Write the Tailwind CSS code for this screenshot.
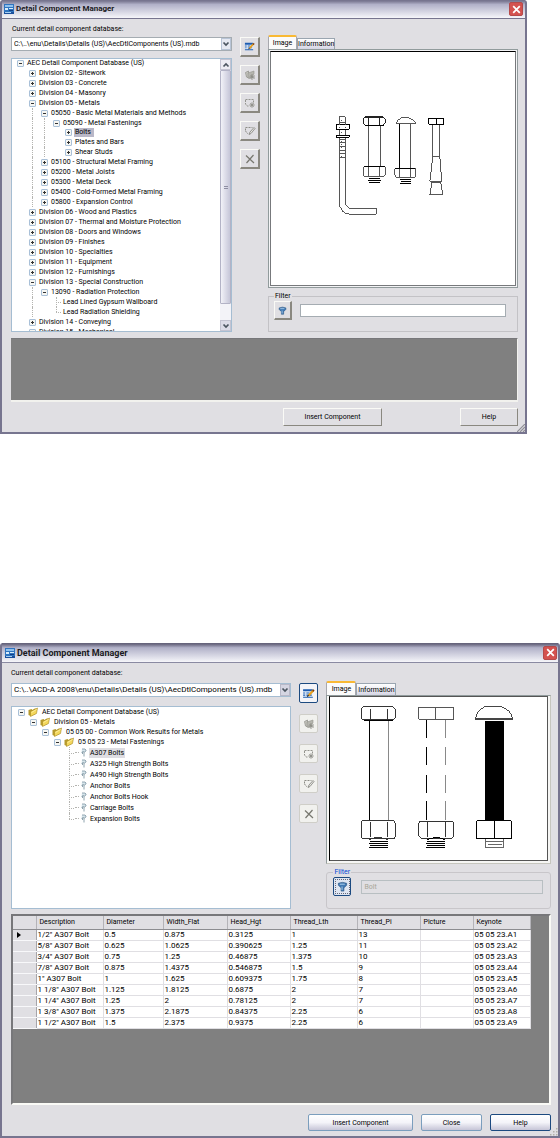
<!DOCTYPE html>
<html lang="en">
<head>
<meta charset="utf-8">
<title>Detail Component Manager</title>
<script src="https://cdn.jsdelivr.net/npm/@tailwindcss/browser@4"></script>
</head>
<body class="bg-white text-black font-['Roboto','Liberation_Sans',sans-serif] text-[7px] leading-[10px]">

<!-- Icons shared by both dialogs -->
<svg class="hidden" aria-hidden="true">
  <defs>
    <symbol id="i-app" viewBox="0 0 10 10"><rect width="10" height="10" fill="#2f74c0"/><path d="M1 1h8v2H1z" fill="#8fc1ee"/><path d="M1 4h3v2H1zM5 4h4v1H5z" fill="#d8ecfb"/><path d="M5 6h4v1H5z" fill="#123f86"/><path d="M0 8h10v2H0z" fill="#1b4f9c"/><path d="M1 8h6v1H1z" fill="#a8d0f3"/></symbol>
    <symbol id="i-x" viewBox="0 0 10 10"><path d="M2 2l6 6M8 2l-6 6" stroke="#fff" stroke-width="1.6" fill="none"/></symbol>
    <symbol id="i-chev" viewBox="0 0 8 8"><path d="M1.5 2.5L4 5l2.500-2.500" stroke="#4b5560" stroke-width="1.7" fill="none"/></symbol>
    <symbol id="i-edit" viewBox="0 0 12 12"><rect x="1" y="2" width="9" height="8" fill="#eaf3fc"/><path d="M1 2h9v2H1zM1 5h2v1H1zM4 5h3v1H4zM1 7h2v1H1zM4 7h5v1H4zM1 9h9v1H1z" fill="#1d5cb0"/><path d="M6 8l4.500-5" stroke="#e8a020" stroke-width="2"/><path d="M10 4l1-1.500" stroke="#7a3b10" stroke-width="1.500"/><path d="M5 9l1-1.500" stroke="#222" stroke-width="1"/></symbol>
    <symbol id="i-add" viewBox="0 0 12 12"><path d="M1.500 3.500l3-1.500v7l-2-1z" fill="#c4c4bd" stroke="#96968f" stroke-width=".8"/><path d="M4 4l6-2v3L6 9.500 4 9z" fill="#b5b5ae" stroke="#96968f" stroke-width=".6"/><path d="M8 5v6M5.500 8h5.500M6.500 6l4 4M10.500 6l-4 4" stroke="#85857e" stroke-width=".8"/></symbol>
    <symbol id="i-comp" viewBox="0 0 12 12"><path d="M1.500 2.500h8v3M1.500 3v4l1.500 2h2" fill="none" stroke="#94948e" stroke-dasharray="2 1"/><circle cx="8" cy="8" r="1.500" fill="#94948e"/><path d="M8 5v6M5 8h6M6 6l4 4M10 6l-4 4" stroke="#94948e" stroke-width=".7"/></symbol>
    <symbol id="i-mod" viewBox="0 0 12 12"><path d="M1.500 5.500v-3h7M1.500 6L4 9" fill="none" stroke="#8c8c86" stroke-dasharray="2 1"/><path d="M5 9.500l1-2.500L10 2.500l1 1L7 8.500z" fill="#e8e8e4" stroke="#7d7d78" stroke-width=".8"/></symbol>
    <symbol id="i-del" viewBox="0 0 12 12"><path d="M2 2.500l8 7.500M9.500 2L2.500 10" stroke="#77776f" stroke-width="1.200" fill="none"/></symbol>
    <symbol id="i-funnel" viewBox="0 0 12 12"><path d="M1.500 2.500q4.500-2 9 0v2L7.500 7.500V11h-3V7.500L1.500 4.500z" fill="#4079b4" stroke="#24507f" stroke-width=".7"/><path d="M3 3.500h5.500M5.500 6v4" stroke="#b4d4ef"/></symbol>
    <symbol id="i-folder" viewBox="0 0 11 10"><path d="M1 3l3-1 1 1 3-2v6L3 9 1 8z" fill="#b69a2d"/><path d="M3 4.500l7-3.500-1 5.500-6 3z" fill="#f3d75c" stroke="#a88a24" stroke-width=".6"/><path d="M4 5.500L9 2.500" stroke="#fff3ac" stroke-width=".8"/></symbol>
    <symbol id="i-bolt" viewBox="0 0 8 9"><path d="M3 1h3l1 1v1L5.500 4 4 3.500 2.500 4.500" fill="#d6e4ea" stroke="#7d96a3" stroke-width=".8"/><path d="M5 4v4.500M3.500 4v2" stroke="#8da2ad"/></symbol>
    <symbol id="i-grip" viewBox="0 0 8 8"><path d="M0 8l8-8M3 8l5-5M6 8l2-2" stroke="#8f8f96" stroke-width="1.200"/></symbol>
    <symbol id="i-dots" viewBox="0 0 8 8"><path d="M6 0h1.500v1.500H6zM3 3h1.500v1.500H3zM6 3h1.500v1.500H6zM0 6h1.500v1.500H0zM3 6h1.500v1.500H3zM6 6h1.500v1.500H6z" fill="#b3b1aa"/></symbol>
  </defs>
</svg>

<!-- Classic-style dialog -->
<section aria-label="Detail Component Manager, classic" class="relative mr-[33px] rounded-t-[3px] border-2 border-t-0 border-[#77758f] bg-[#e0dfe3]">
  <header class="flex h-[19px] items-center gap-[2px] border-b border-[#77758f] bg-linear-to-b from-[#77758f] from-5% via-[#b1b1c8] via-25% to-[#f6f6fa] pl-[2px] pr-[2px]">
    <svg class="size-[10px]"><use href="#i-app"/></svg>
    <h1 class="grow text-[8px] font-bold leading-[12px] text-[#1a1a22]">Detail Component Manager</h1>
    <button aria-label="Close window" class="grid size-[14px] place-items-center rounded-[2px] border border-[#b54a4a] bg-[#d4524f]"><svg class="size-[11px]"><use href="#i-x"/></svg></button>
  </header>
  <main class="pl-[9px] pr-[7px] pt-[4px]">
    <div class="grid grid-cols-[minmax(0,221fr)_20px_minmax(0,250fr)] gap-x-2">
      <div class="flex flex-col pt-px">
        <label for="db1" class="pl-px">Current detail component database:</label>
        <div class="relative mt-[3px]">
          <select id="db1" class="block h-[14px] w-full appearance-none border border-[#a5acb2] bg-white pl-[2px] leading-[12px]"><option>C:\..\enu\Details\Details (US)\AecDtlComponents (US).mdb</option></select>
          <span class="pointer-events-none absolute inset-y-[1px] right-[1px] grid w-[10px] place-items-center border border-[#b8c4d6] bg-[#e6e9f2]"><svg class="size-2"><use href="#i-chev"/></svg></span>
        </div>
        <div class="mt-[7px] flex h-[274px] border border-[#a5bdd2] bg-white">
          <ul id="tree1" role="tree" aria-label="Components" class="min-w-0 grow overflow-hidden pl-[2px]"></ul>
          <div class="flex w-[11px] flex-none flex-col bg-[#f3f3f8]">
            <button aria-label="Scroll up" class="grid h-[11px] place-items-center border border-[#c4c4d2] bg-[#ececf3]"><svg class="size-2 rotate-180"><use href="#i-chev"/></svg></button>
            <div class="flex h-[234px] flex-col items-center justify-center gap-[1px] rounded-[1px] border border-[#b3b3c6] bg-linear-to-r from-[#f2f2f8] to-[#c6c6d8]"><i class="h-px w-1 bg-[#8e8ea2]"></i><i class="h-px w-1 bg-[#8e8ea2]"></i></div>
            <button aria-label="Scroll down" class="mt-auto grid h-[11px] place-items-center border border-[#c4c4d2] bg-[#dcdce8]"><svg class="size-2"><use href="#i-chev"/></svg></button>
          </div>
        </div>
      </div>
      <div class="flex flex-col gap-2 pt-[14px]">
        <button aria-label="Edit database" class="grid h-5 place-items-center border border-b-2 border-r-2 border-[#fafaf6] border-b-[#8a8880] border-r-[#8a8880]"><svg class="size-[11px]"><use href="#i-edit"/></svg></button>
        <button aria-label="Add group" disabled class="grid h-5 place-items-center border border-b-2 border-r-2 border-[#fafaf6] border-b-[#8a8880] border-r-[#8a8880]"><svg class="size-3"><use href="#i-add"/></svg></button>
        <button aria-label="Add component" disabled class="grid h-5 place-items-center border border-b-2 border-r-2 border-[#fafaf6] border-b-[#8a8880] border-r-[#8a8880]"><svg class="size-3"><use href="#i-comp"/></svg></button>
        <button aria-label="Edit" disabled class="grid h-5 place-items-center border border-b-2 border-r-2 border-[#fafaf6] border-b-[#8a8880] border-r-[#8a8880]"><svg class="size-3"><use href="#i-mod"/></svg></button>
        <button aria-label="Delete" disabled class="grid h-5 place-items-center border border-b-2 border-r-2 border-[#fafaf6] border-b-[#8a8880] border-r-[#8a8880]"><svg class="size-3"><use href="#i-del"/></svg></button>
      </div>
      <div class="flex flex-col pt-[12px]">
        <div role="tablist" class="flex items-end">
          <button role="tab" aria-selected="true" class="h-[14px] w-[29px] rounded-t-[2px] border-x border-t-2 border-[#a8a8ae] border-t-[#f9b934] bg-[#fbfbfb]">Image</button>
          <button role="tab" aria-selected="false" class="h-[11px] w-[38px] border border-b-0 border-[#9aa5b0] bg-linear-to-b from-white to-[#d5d5e4] leading-[10px]">Information</button>
        </div>
        <div role="tabpanel" aria-label="Image" class="h-[239px] border border-[#919b9c] bg-[#f4f4f6] p-[1px]">
          <svg class="block size-full border border-[#77797c] border-t-black bg-white" viewBox="271 51 245 234" fill="none" stroke="#555" stroke-width="1" shape-rendering="crispEdges" role="img" aria-label="Bolt types">
            <path d="M339.500 116v84q0 14 12 14h25v-6h-25q-6 0-6-8v-84zM339 121.500h6M339 128.500h6M339 138.500h6M339 141.500h6M339 145.500h6M339 149.500h6M339 152.500h6M339 156.500h6"/>
            <path d="M336.500 123.500h13v5h-13zM336.500 134.500h13v2h-13z" fill="#fff" stroke="#000"/><path d="M339.500 123v5M345.500 123v5M342 119v3M342 131v3M342 140v16" stroke-dasharray="1 2"/>
            <path d="M368.500 125v40M380.500 125v40"/><path d="M365 116.500h19M363.500 118v4l2 2.500h18l2-2.500v-4l-2-2h-18zM368.500 117v7M379.500 117v7" stroke="#222"/><path d="M365 124.500h19M364 165.500h21" stroke="#000"/><path d="M363.500 166v8l2 2.500h18l2-2.500v-8M368.500 166v10M379.500 166v10"/><path d="M369 178h11M368 180h13M369 182h11" stroke="#000" stroke-width="1.500"/>
            <path d="M400.500 122v45" stroke="#000"/><path d="M411.500 122v45M396.500 122.500q2-4 6-5.500h7q4 1.500 7 5.500z"/><path d="M396 167.500h21" stroke="#000"/><path d="M395.500 168v7l2 2.500h17l2-2.500v-8M400.500 168v9M411.500 168v9"/><path d="M401 179h11M402 181h10M401 183h11" stroke="#000" stroke-width="1.500"/>
            <path d="M433.500 124v32h7v-32M433.500 156l-3 25h12l-2-25M432.500 182l-2 12.500h13l-2-12.500z"/><path d="M429.500 117.500h15v6h-15zM437.500 117v6" stroke="#000"/>
          </svg>
        </div>
        <fieldset class="mt-[3px] flex h-[41px] items-center border border-[#c3c2c6] pb-[4px] pl-[5px] pr-[11px]">
          <legend class="px-[1px]">Filter</legend>
          <button aria-label="Apply filter" class="grid h-[19px] w-[18px] flex-none place-items-center border border-b-2 border-r-2 border-[#fafaf6] border-b-[#8a8880] border-r-[#8a8880]"><svg class="size-[9px]"><use href="#i-funnel"/></svg></button>
          <input aria-label="Filter text" class="ml-2 h-[13px] min-w-0 grow border border-[#a5acb2] bg-white px-[3px]">
        </fieldset>
      </div>
    </div>
    <div class="mt-[6px] h-[64px] border-b-2 border-r border-t border-[#f2f2ee] border-t-[#77777a] bg-[#808080]"></div>
    <div class="flex justify-end gap-[78px] pb-[6px] pt-[6px]">
      <button class="h-[18px] w-[99px] border border-[#fafaf6] border-b-[#8a8880] border-r-[#8a8880]">Insert Component</button>
      <button class="h-[18px] w-[58px] border border-[#fafaf6] border-b-[#8a8880] border-r-[#8a8880]">Help</button>
    </div>
  </main>
  <svg class="absolute bottom-0 right-0 size-2"><use href="#i-grip"/></svg>
</section>

<!-- XP-style dialog -->
<section aria-label="Detail Component Manager" class="relative mt-[209px] rounded-t-[3px] border-2 border-t-0 border-[#77758f] bg-[#e0dfe3]">
  <header class="flex h-5 items-center gap-[2px] border-b border-[#8a8aa2] bg-linear-to-b from-[#66647c] from-5% via-[#b1b1c8] via-25% to-[#f6f6fa] pl-[3px] pr-[1px]">
    <svg class="size-[10px]"><use href="#i-app"/></svg>
    <h1 class="grow text-[9px] font-bold leading-[12px] text-[#1a1a22]">Detail Component Manager</h1>
    <button aria-label="Close window" class="grid size-[14px] place-items-center rounded-[2px] border border-[#b54a4a] bg-[#d4524f]"><svg class="size-[11px]"><use href="#i-x"/></svg></button>
  </header>
  <main class="pl-[9px] pr-[7px] pt-[5px]">
    <div class="grid grid-cols-[minmax(0,281fr)_19px_minmax(0,225fr)] gap-x-2">
      <div class="flex flex-col">
        <label for="db2">Current detail component database:</label>
        <div class="relative mt-[5px]">
          <select id="db2" class="block h-[14px] w-full appearance-none border border-[#a5bdd2] bg-white pl-[2px] text-[8px] leading-[12px]"><option>C:\..\ACD-A 2008\enu\Details\Details (US)\AecDtlComponents (US).mdb</option></select>
          <span class="pointer-events-none absolute inset-y-[1px] right-[1px] grid w-[10px] place-items-center border border-[#b8b8c8] bg-[#d5d5e2]"><svg class="size-2"><use href="#i-chev"/></svg></span>
        </div>
        <ul id="tree2" role="tree" aria-label="Components" class="mt-[9px] h-[203px] overflow-hidden border border-[#a5bdd2] bg-white pl-[3px]"></ul>
      </div>
      <div class="flex flex-col gap-[11px] pt-[15px]">
        <button aria-label="Edit database" class="grid h-5 place-items-center rounded-[2px] border border-[#1c4a80] bg-[#f4f4f8]"><svg class="size-[13px]"><use href="#i-edit"/></svg></button>
        <button aria-label="Add group" disabled class="grid h-[19px] place-items-center rounded-[2px] border border-[#cfcec8] bg-[#f1f1ee]"><svg class="size-3"><use href="#i-add"/></svg></button>
        <button aria-label="Add component" disabled class="grid h-[19px] place-items-center rounded-[2px] border border-[#cfcec8] bg-[#f1f1ee]"><svg class="size-3"><use href="#i-comp"/></svg></button>
        <button aria-label="Edit" disabled class="grid h-[19px] place-items-center rounded-[2px] border border-[#cfcec8] bg-[#f1f1ee]"><svg class="size-3"><use href="#i-mod"/></svg></button>
        <button aria-label="Delete" disabled class="grid h-[19px] place-items-center rounded-[2px] border border-[#cfcec8] bg-[#f1f1ee]"><svg class="size-3"><use href="#i-del"/></svg></button>
      </div>
      <div class="flex flex-col pt-[13px]">
        <div role="tablist" class="flex items-end">
          <button role="tab" aria-selected="true" class="h-[14px] w-[30px] rounded-t-[2px] border-x border-t-2 border-[#a8a8ae] border-t-[#f9b934] bg-[#fbfbfb]">Image</button>
          <button role="tab" aria-selected="false" class="h-[12px] w-[40px] border border-b-0 border-[#9aa5b0] bg-linear-to-b from-white to-[#d5d5e4]">Information</button>
        </div>
        <div role="tabpanel" aria-label="Image" class="h-[169px] border border-[#919b9c] border-b-[#c6c6be] border-r-[#c6c6be] bg-[#f6f6f4] px-[2px] pb-[2px]">
          <svg class="block size-full border border-[#555] border-l-black bg-white" viewBox="330 697 218 164" fill="none" stroke="#000" stroke-width="1" shape-rendering="crispEdges" role="img" aria-label="A307 bolt views">
            <path d="M369.500 720v102"/><path d="M388.500 720v102" stroke="#888"/>
            <path d="M361.500 709v9l2 2h30l2-2v-9l-2-2h-30zM370.500 709v11M387.500 709v11" stroke="#333"/><path d="M364 720.500h29"/>
            <path d="M361.500 823.500q0-2 2-2h30q2 0 2 2v14q0 2-2 2h-30q-2 0-2-2zM370.500 823v15M387.500 823v15M369 840.500q9-4 19 0" stroke="#333"/><path d="M370 842h18M369 844.500h19M370 846.500h18M369 848.500h19"/>
            <path d="M419.500 707.500h35v12h-35zM436.500 707v12" stroke="#555"/><path d="M427.500 720v18M427.500 747v18M427.500 775v19M427.500 802v19"/><path d="M446.500 720v18M446.500 747v18M446.500 775v19M446.500 802v19" stroke="#888"/>
            <path d="M421 822h33"/><path d="M419.500 824v13l2 2h31l2-2v-13l-1-2h-33zM428.500 823v15M446.500 823v15" stroke="#333"/><path d="M428 840.500q9-4 18 0M428 842h18M427 844.500h19M428 846.500h18M427 848.500h19"/>
            <path d="M476.500 720v-2q2-8 9-11h18q8 3 10 11v2zM476 718.500h37" stroke="#444"/><path d="M486 721h19v100h-19z" fill="#000" stroke="none"/>
            <path d="M477.500 821.500h35v18h-35zM495.500 821v18"/><path d="M486.500 840v8.500h18V840M487 842.500h17M489 845.500h14" stroke="#666"/>
          </svg>
        </div>
        <fieldset class="mt-[3px] flex h-[42px] items-center rounded-[3px] border border-[#c8c6ca] pb-[3px] pl-[6px] pr-[7px]">
          <legend class="px-[1px] text-[#0046d5]">Filter</legend>
          <button aria-label="Apply filter" class="grid h-[19px] w-[18px] flex-none place-items-center rounded-[2px] border border-[#1c4a80] bg-[#dfe6f2]"><span class="grid size-[15px] place-items-center border border-dotted border-[#667]"><svg class="size-[11px]"><use href="#i-funnel"/></svg></span></button>
          <input aria-label="Filter text" disabled value="Bolt" class="ml-[10px] h-[14px] min-w-0 grow border border-[#b8bfc2] bg-transparent px-[2px] text-[#a8a698]">
        </fieldset>
      </div>
    </div>
    <div class="mt-[5px] h-[191px] overflow-hidden border-2 border-[#fafaf6] border-l-[#77777a] border-t-[#77777a] bg-[#808080]">
      <table class="w-[517px] table-fixed border-collapse bg-white text-left">
        <colgroup><col class="w-[23px]"><col class="w-[67px]"><col class="w-[60px]"><col class="w-[64px]"><col class="w-[63px]"><col class="w-[67px]"><col class="w-[63px]"><col class="w-[53px]"><col class="w-[57px]"></colgroup>
        <thead><tr id="heads" class="h-[13px] bg-[#e0dfe3]"></tr></thead>
        <tbody id="rows" class="text-[8px]"></tbody>
      </table>
    </div>
    <div class="flex justify-end gap-2 pb-[5px] pt-[9px]">
      <button class="h-[17px] w-[105px] rounded-[2px] border border-[#7b9ebd] bg-linear-to-b from-white via-[#f4f4f9] to-[#c6c5d7]">Insert Component</button>
      <button class="h-[17px] w-[61px] rounded-[2px] border border-[#7b9ebd] bg-linear-to-b from-white via-[#f4f4f9] to-[#c6c5d7]">Close</button>
      <button class="h-[17px] w-[61px] rounded-[2px] border border-[#1c4a80] bg-linear-to-b from-white via-[#f4f4f9] to-[#c6c5d7]">Help</button>
    </div>
  </main>
  <svg class="absolute bottom-0 right-0 size-2"><use href="#i-dots"/></svg>
</section>

<script>
// Each entry: [guides, kind, label]. One guide letter per parent level: "|" draws a line, "." leaves it blank.
// Kinds: "+" collapsed, "-" expanded, "t" leaf, "l" last leaf.
const tree1 = [
  ['', '-', 'AEC Detail Component Database (US)'],
  ['.', '+', 'Division 02 - Sitework'], ['.', '+', 'Division 03 - Concrete'], ['.', '+', 'Division 04 - Masonry'],
  ['.', '-', 'Division 05 - Metals'],
  ['.|', '-', '05050 - Basic Metal Materials and Methods'],
  ['.||', '-', '05090 - Metal Fastenings'],
  ['.||.', '+', 'Bolts', 'sel'], ['.||.', '+', 'Plates and Bars'], ['.||.', '+', 'Shear Studs'],
  ['.|', '+', '05100 - Structural Metal Framing'], ['.|', '+', '05200 - Metal Joists'], ['.|', '+', '05300 - Metal Deck'],
  ['.|', '+', '05400 - Cold-Formed Metal Framing'], ['.|', '+', '05800 - Expansion Control'],
  ['.', '+', 'Division 06 - Wood and Plastics'], ['.', '+', 'Division 07 - Thermal and Moisture Protection'],
  ['.', '+', 'Division 08 - Doors and Windows'], ['.', '+', 'Division 09 - Finishes'], ['.', '+', 'Division 10 - Specialties'],
  ['.', '+', 'Division 11 - Equipment'], ['.', '+', 'Division 12 - Furnishings'], ['.', '-', 'Division 13 - Special Construction'],
  ['.|', '-', '13090 - Radiation Protection'],
  ['.|.', 't', 'Lead Lined Gypsum Wallboard'], ['.|.', 'l', 'Lead Radiation Shielding'],
  ['.', '+', 'Division 14 - Conveying'], ['.', '+', 'Division 15 - Mechanical']
];
const tree2 = [
  ['', '-', 'AEC Detail Component Database (US)'], ['.', '-', 'Division 05 - Metals'],
  ['..', '-', '05 05 00 - Common Work Results for Metals'], ['...', '-', '05 05 23 - Metal Fastenings'],
  ['....', 't', 'A307 Bolts', 'sel'], ['....', 't', 'A325 High Strength Bolts'], ['....', 't', 'A490 High Strength Bolts'],
  ['....', 't', 'Anchor Bolts'], ['....', 't', 'Anchor Bolts Hook'], ['....', 't', 'Carriage Bolts'], ['....', 'l', 'Expansion Bolts']
];
const guide = c => `<span class="flex w-3 flex-none justify-center self-stretch">${c === '|' ? '<i class="border-l border-dotted border-[#b4b4b0]"></i>' : ''}</span>`;
const knob = k => k === 't' || k === 'l'
  ? `<span class="relative w-3 flex-none self-stretch"><i class="absolute left-[6px] top-0 border-l border-dotted border-[#b4b4b0] ${k === 't' ? 'h-full' : 'h-1/2'}"></i><i class="absolute left-[6px] right-[1px] top-1/2 border-t border-dotted border-[#b4b4b0]"></i></span>`
  : `<span class="flex w-3 flex-none items-center justify-center"><button aria-label="Toggle" class="relative size-[7px] flex-none rounded-[1px] border border-[#a9c0d8] bg-[#f6f6f2]"><i class="absolute inset-x-px top-[2px] h-px bg-[#333]"></i>${k === '+' ? '<i class="absolute inset-y-px left-[2px] w-px bg-[#333]"></i>' : ''}</button></span>`;
const label = (t, sel, bg) => `<span class="whitespace-nowrap px-[1px] ${sel ? bg : ''}">${t}</span>`;
document.getElementById('tree1').innerHTML = tree1.map(([g, k, t, s]) =>
  `<li role="treeitem" class="flex items-center ${!g || s ? 'h-[9px] leading-[9px]' : 'h-[10px]'}">${[...g].map(guide).join('')}${knob(k)}${label(t, s, 'bg-[#b9b8c8] pr-[3px]')}</li>`).join('');
document.getElementById('tree2').innerHTML = tree2.map(([g, k, t, s]) => {
  const leaf = k === 't' || k === 'l';
  const icon = leaf
    ? '<i class="w-[4px] flex-none border-t border-dotted border-[#b4b4b0]"></i><svg class="mr-[2px] h-[9px] w-2 flex-none"><use href="#i-bolt"/></svg>'
    : '<svg class="mr-[2px] h-[10px] w-[12px] flex-none"><use href="#i-folder"/></svg>';
  return `<li role="treeitem" class="flex items-center ${leaf ? 'h-[11px]' : 'h-[10px]'}">${[...g].map(guide).join('')}${knob(k)}${icon}${label(t, s, 'bg-[#dedde2]')}</li>`;
}).join('');

const heads = ['', 'Description', 'Diameter', 'Width_Flat', 'Head_Hgt', 'Thread_Lth', 'Thread_Pi', 'Picture', 'Keynote'];
const rows = [
  ['1/2" A307 Bolt', '0.5', '0.875', '0.3125', '1', '13'], ['5/8" A307 Bolt', '0.625', '1.0625', '0.390625', '1.25', '11'],
  ['3/4" A307 Bolt', '0.75', '1.25', '0.46875', '1.375', '10'], ['7/8" A307 Bolt', '0.875', '1.4375', '0.546875', '1.5', '9'],
  ['1" A307 Bolt', '1', '1.625', '0.609375', '1.75', '8'], ['1 1/8" A307 Bolt', '1.125', '1.8125', '0.6875', '2', '7'],
  ['1 1/4" A307 Bolt', '1.25', '2', '0.78125', '2', '7'], ['1 3/8" A307 Bolt', '1.375', '2.1875', '0.84375', '2.25', '6'],
  ['1 1/2" A307 Bolt', '1.5', '2.375', '0.9375', '2.25', '6']
];
document.getElementById('heads').innerHTML = heads.map(h => `<th scope="col" class="border-b border-r border-b-[#8c8c90] border-r-[#b4b3b8] p-0 pl-[3px] font-normal">${h}</th>`).join('');
document.getElementById('rows').innerHTML = rows.map((r, i) =>
  `<tr class="h-[11px]"><th scope="row" class="border-b border-r border-b-[#f8f8fa] border-r-[#a5a4aa] bg-[#e0dfe3] p-0 pl-[4px]">${i ? '' : '<svg class="block h-[6px] w-1" viewBox="0 0 4 6"><path d="M0 0l4 3-4 3z"/></svg>'}</th>`
  + [...r, '', '05 05 23.A' + (i + 1)].map(c => `<td class="border-b border-r border-[#e0dfe3] p-0 pl-px leading-[10px]">${c}</td>`).join('') + '</tr>').join('');
</script>
</body>
</html>
